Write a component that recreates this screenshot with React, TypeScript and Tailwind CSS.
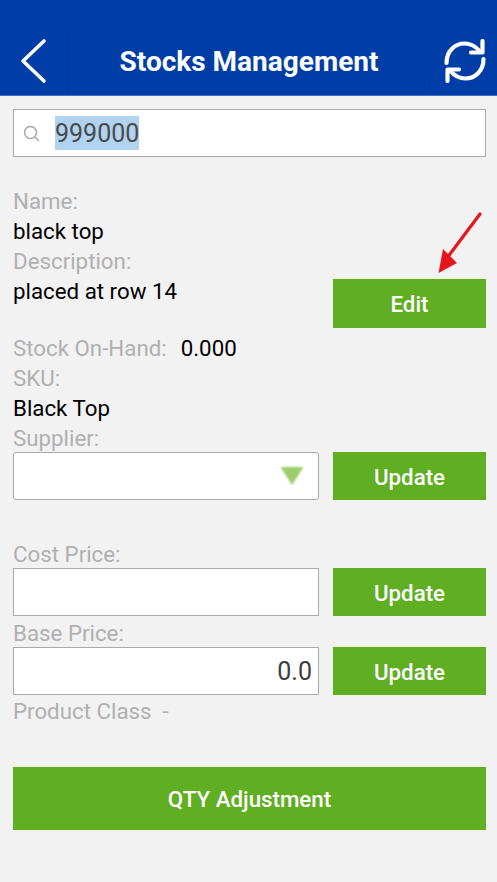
import React from "react";

const font = { fontFamily: "Roboto, sans-serif" };

function Label({ children }: { children: React.ReactNode }) {
  return <div className="h-[30px] leading-[31px] text-[22.3px] text-[#b0b0b0]">{children}</div>;
}
function Value({ children }: { children: React.ReactNode }) {
  return <div className="h-[30px] leading-[31px] text-[22.3px] text-black">{children}</div>;
}
function GreenButton({ children, tall }: { children: React.ReactNode; tall?: boolean }) {
  return (
    <div className={`${tall ? "h-[49px] pt-[2px]" : "h-[48px] pt-[3px]"} w-[153px] bg-[#60ae22] text-white text-[22.3px] font-medium flex items-center justify-center shrink-0`}>
      {children}
    </div>
  );
}

export default function App() {
  return (
    <div className="relative w-[497px] h-[882px] bg-[#f2f2f3] overflow-hidden" style={font}>
      <header className="h-[96px] bg-[#003da6] border-b border-[#3f73c4] pt-[28px] flex">
        <div className="w-[69px] border-r border-[#05389a] flex items-center justify-center">
          <svg width="30" height="46" viewBox="0 0 30 46" fill="none" stroke="white" strokeWidth="3.6" strokeLinecap="round" strokeLinejoin="round" className="mr-[2px] mt-[-1px]">
            <path d="M26 3 L5 23 L26 43" />
          </svg>
        </div>
        <div className="flex-1 flex items-center justify-center text-white text-[28px] font-bold pt-[1px]">Stocks Management</div>
        <div className="w-[68px] border-l border-[#05389a] flex items-center justify-center">
          <svg width="42" height="44" viewBox="0 0 42 44" fill="none" stroke="white" strokeWidth="4.2" strokeLinecap="round" strokeLinejoin="round" className="mt-[-2px] ml-[2px]">
            <path d="M2.5 24 C2.5 12 11 4.5 20.5 4.5 C27 4.5 31.5 7 36 12.5" />
            <path d="M38.5 2 V13.5 H27" />
            <path d="M39.5 20 C39.5 32 31 39.5 21.5 39.5 C15 39.5 10.5 37 6 31.5" />
            <path d="M3.5 42 V30.5 H15" />
          </svg>
        </div>
      </header>

      <main className="px-[13px] pr-[11px] pt-[13px]">
        <div className="h-[48px] bg-white border border-[#a9a9a9] flex items-center pl-[8px]">
          <svg width="17" height="17" viewBox="0 0 17 17" fill="none" stroke="#a8a8a8" strokeWidth="1.5" strokeLinecap="round" className="ml-[1px]">
            <circle cx="7.5" cy="7.5" r="6" />
            <path d="M12 12 L15.5 15.5" />
          </svg>
          <span className="ml-[15px] h-[34px] leading-[36px] bg-[#b0d3f0] text-[25px] text-[#4a4a4a]">999000</span>
        </div>

        <div className="flex gap-[14px] mt-[29px]">
          <div className="w-[306px]">
            <Label>Name:</Label>
            <Value>black top</Value>
            <Label>Description:</Label>
            <Value>placed at row 14</Value>
          </div>
          <div className="mt-[93px]">
            <GreenButton tall>Edit</GreenButton>
          </div>
        </div>

        <div className="mt-[5px]">
          <div className="flex">
            <Label>Stock On-Hand:</Label>
            <div className="ml-[14px]"><Value>0.000</Value></div>
          </div>
          <Label>SKU:</Label>
          <Value>Black Top</Value>
          <Label>Supplier:</Label>
        </div>

        <div className="flex gap-[14px] mt-[-1px]">
          <div className="w-[306px] h-[48px] bg-white border border-[#a9a9a9] rounded-[3px] flex items-center justify-end pr-[14px]">
            <svg width="24" height="20" viewBox="0 0 24 20" style={{ filter: "blur(0.8px)" }}>
              <path d="M0.5 1 H23.5 L12 19 Z" fill="#9bcb6b" />
            </svg>
          </div>
          <GreenButton>Update</GreenButton>
        </div>

        <div className="mt-[39px]"><Label>Cost Price:</Label></div>
        <div className="flex gap-[14px] mt-[-1px]">
          <div className="w-[306px] h-[48px] bg-white border border-[#a9a9a9]" />
          <GreenButton>Update</GreenButton>
        </div>

        <div className="h-[31px] leading-[34px] text-[22.3px] text-[#b0b0b0]">Base Price:</div>
        <div className="flex gap-[14px]">
          <div className="w-[306px] h-[48px] bg-white border border-[#a9a9a9] flex items-center justify-end pr-[6px] pt-[2px] text-[25px] text-[#3c3c3c]">0.0</div>
          <GreenButton>Update</GreenButton>
        </div>

        <div className="mt-[1px] h-[30px] leading-[30px] text-[22.3px] text-[#b0b0b0] whitespace-pre">Product Class  -</div>

        <div className="mt-[41px] h-[63px] pt-[3px] bg-[#60ae22] text-white text-[22.3px] font-medium flex items-center justify-center">QTY Adjustment</div>
      </main>

      <svg className="absolute left-[430px] top-[208px]" width="60" height="70" viewBox="430 208 60 70">
        <path d="M480 214 L447 258" stroke="#e8151d" strokeWidth="3.2" strokeLinecap="round" fill="none" />
        <path d="M438.5 273 L443 249 L457 263 Z" fill="#e8151d" />
      </svg>
    </div>
  );
}
